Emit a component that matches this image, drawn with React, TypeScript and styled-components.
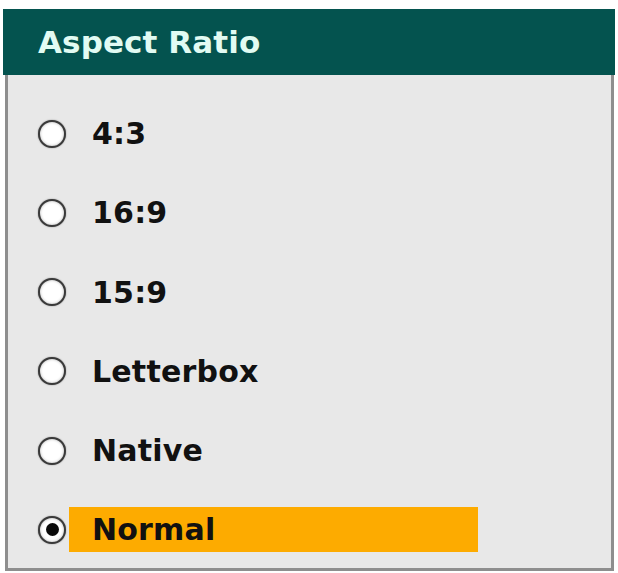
import React from 'react';
import styled, { createGlobalStyle } from 'styled-components';

const GlobalStyle = createGlobalStyle`
  html, body {
    margin: 0;
    padding: 0;
    background: #ffffff;
  }
  * {
    box-sizing: border-box;
  }
`;

const Frame = styled.div`
  width: 618px;
  height: 573px;
  padding: 9px 3px 0 3px;
  font-family: 'DejaVu Sans', 'Liberation Sans', sans-serif;
`;

const TitleBar = styled.div`
  height: 66px;
  background: #04534f;
  display: flex;
  align-items: center;
  padding-left: 35px;
  color: #e2fbf3;
  font-size: 31px;
  font-weight: bold;
  letter-spacing: 0.1px;
`;

const Panel = styled.div`
  margin: 0 1px 0 2px;
  height: 496px;
  background: #e8e8e8;
  border: 3px solid #8e8e8e;
  border-top: none;
  padding: 36px 0 0 30px;
  display: flex;
  flex-direction: column;
  gap: 34.3px;
`;

const Row = styled.div`
  display: flex;
  align-items: center;
  height: 45px;
`;

const Radio = styled.span<{ $checked: boolean }>`
  width: 28px;
  height: 28px;
  border-radius: 50%;
  border: 2.5px solid #3a3a3a;
  background: #ffffff;
  box-shadow: inset 0 0 3px rgba(0, 0, 0, 0.3), 0 0 1.5px rgba(0, 0, 0, 0.45);
  display: flex;
  align-items: center;
  justify-content: center;
  flex-shrink: 0;

  &::after {
    content: '';
    width: 13px;
    height: 13px;
    border-radius: 50%;
    background: #0a0a0a;
    display: ${(p) => (p.$checked ? 'block' : 'none')};
  }
`;

const Label = styled.span<{ $active: boolean }>`
  margin-left: 3px;
  width: 409px;
  height: 45px;
  display: flex;
  align-items: center;
  padding-left: 23px;
  background: ${(p) => (p.$active ? '#fdab00' : 'transparent')};
  color: #111111;
  font-size: 30px;
  font-weight: bold;
  letter-spacing: 0.2px;
`;

const options = ['4:3', '16:9', '15:9', 'Letterbox', 'Native', 'Normal'];

const App: React.FC = () => {
  const selected = 'Normal';
  return (
    <>
      <GlobalStyle />
      <Frame>
        <TitleBar>Aspect Ratio</TitleBar>
        <Panel>
          {options.map((opt) => (
            <Row key={opt}>
              <Radio $checked={opt === selected} />
              <Label $active={opt === selected}>{opt}</Label>
            </Row>
          ))}
        </Panel>
      </Frame>
    </>
  );
};

export default App;
